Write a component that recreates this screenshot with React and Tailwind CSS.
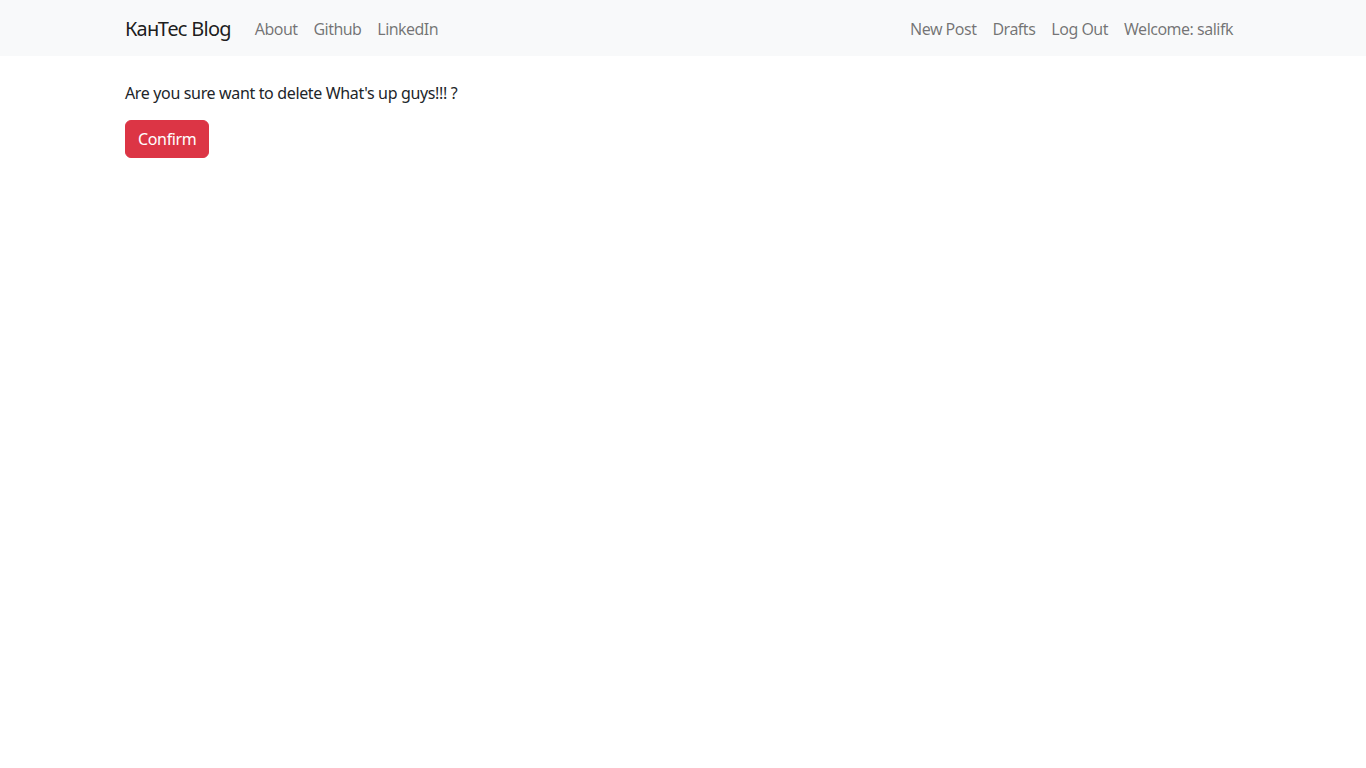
import React from "react";

// navbar + halaman konfirmasi hapus
const leftLinks = ["About", "Github", "LinkedIn"];
const rightLinks = ["New Post", "Drafts", "Log Out", "Welcome: salifk"];

export default function App() {
  return (
    <div
      className="min-h-screen bg-white text-[#212529] text-base leading-6 tracking-[-0.35px]"
      style={{ fontFamily: '"Noto Sans", "Liberation Sans", sans-serif' }}
    >
      <nav className="bg-[#f8f9fa] pt-[9px] pb-[7px]">
        <div className="mx-auto w-[1140px] px-3 flex items-center justify-between">
          <div className="flex items-center">
            <a href="#" className="text-xl leading-[30px] py-[5px] mr-4 text-black/90 tracking-[-0.75px]">
              КанТес Blog
            </a>
            <ul className="flex tracking-[-0.55px]">
              {leftLinks.map((l) => (
                <li key={l}>
                  <a href="#" className="block px-2 py-2 text-black/55">
                    {l}
                  </a>
                </li>
              ))}
            </ul>
          </div>
          <ul className="flex tracking-[-0.5px]">
            {rightLinks.map((l) => (
              <li key={l}>
                <a href="#" className="block px-2 py-2 text-black/55">
                  {l}
                </a>
              </li>
            ))}
          </ul>
        </div>
      </nav>

      <main className="mx-auto w-[1140px] px-3 mt-[25px]">
        <p className="mb-[15px]">Are you sure want to delete What's up guys!!! ?</p>
        <button
          type="button"
          className="bg-[#dc3545] text-white px-3 py-[6px] rounded-[6px] border border-[#dc3545] leading-6"
        >
          Confirm
        </button>
      </main>
    </div>
  );
}
